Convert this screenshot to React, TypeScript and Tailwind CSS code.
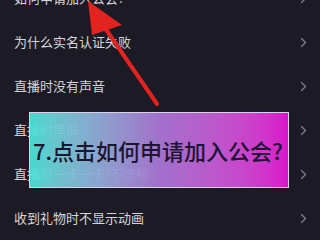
const items = [
  "如何申请加入公会?",
  "为什么实名认证失败",
  "直播时没有声音",
  "直播时黑屏",
  "直播时一卡一卡/不流畅",
  "收到礼物时不显示动画",
];

function Chevron() {
  return (
    <svg width="7" height="11" viewBox="0 0 7 11" fill="none">
      <path d="M1.5 1.5 L5.5 5.5 L1.5 9.5" stroke="#7a7986" strokeWidth="1.4" strokeLinecap="round" strokeLinejoin="round" />
    </svg>
  );
}

export default function App() {
  return (
    <div
      className="relative h-[240px] w-[320px] overflow-hidden bg-[#1c1b25]"
      style={{ fontFamily: '"Noto Sans CJK SC", "Noto Sans", sans-serif' }}
    >
      <ul className="-mt-[24px]">
        {items.map((t) => (
          <li key={t} className="flex h-[44px] items-center justify-between pl-[14px] pr-[13px]">
            <span className="text-[13px] text-[#d6d5dc]">{t}</span>
            <Chevron />
          </li>
        ))}
      </ul>

      <div className="absolute left-[29px] top-[112px] flex h-[76px] w-[260px] items-center border border-[#d9d2e6] bg-gradient-to-r from-[#46e2d6]/95 via-[#a875d4]/95 to-[#e410d4]/95 pl-[3px]">
        <span className="text-[22px] leading-none font-medium text-[#1b1530]">7.点击如何申请加入公会?</span>
      </div>

      <svg className="absolute left-0 top-0" width="320" height="240" viewBox="0 0 320 240">
        <line x1="105" y1="28" x2="157" y2="104" stroke="#e2231f" strokeWidth="4" strokeLinecap="round" />
        <polygon points="88,1 92,35 122,25" fill="#e2231f" />
      </svg>
    </div>
  );
}
